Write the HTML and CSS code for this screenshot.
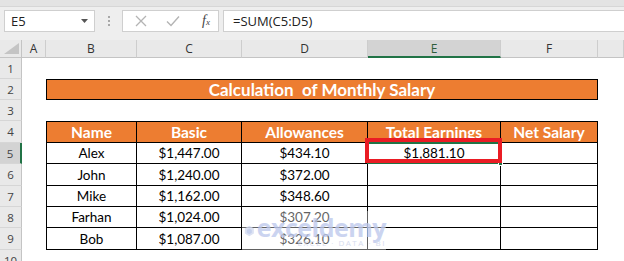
FILE: index.html
```html
<!DOCTYPE html>
<html lang="en">
<head>
    <meta charset="UTF-8">
    <meta name="viewport" content="width=device-width, initial-scale=1.0">
    <title>Calculation of Monthly Salary</title>
    <link rel="stylesheet" href="styles.css">
</head>
<body>
    <div class="app">
        <div class="ribbon-edge"></div>

        <!-- Formula bar -->
        <div class="formula-bar">
            <div class="name-box">
                <span>E5</span>
                <svg class="caret" width="7" height="4" viewBox="0 0 7 4"><path d="M0 0h7L3.5 4z" fill="#555"/></svg>
            </div>
            <div class="grip">
                <span></span><span></span><span></span>
            </div>
            <div class="fx-buttons">
                <svg width="12" height="12" viewBox="0 0 12 12"><path d="M1 1l10 10M11 1L1 11" stroke="#b4b4b4" stroke-width="1.3" fill="none"/></svg>
                <svg width="14" height="12" viewBox="0 0 14 12"><path d="M1 6.5l4 4L13 1.5" stroke="#b4b4b4" stroke-width="1.4" fill="none"/></svg>
                <span class="fx">f<sub>x</sub></span>
            </div>
            <div class="formula-input">=SUM(C5:D5)</div>
        </div>

        <!-- Worksheet -->
        <div class="sheet">
            <div class="corner"><svg width="15" height="11" viewBox="0 0 15 11"><path d="M15 0v11H0z" fill="#c4c4c4"/></svg></div>
            <div class="col-head">A</div>
            <div class="col-head">B</div>
            <div class="col-head">C</div>
            <div class="col-head">D</div>
            <div class="col-head selected">E</div>
            <div class="col-head">F</div>
            <div class="col-head"></div>

            <div class="row-head">1</div>
            <div></div><div></div><div></div><div></div><div></div><div></div><div></div>

            <div class="row-head">2</div>
            <div></div>
            <div class="title">Calculation&nbsp; of Monthly Salary</div>
            <div></div>

            <div class="row-head">3</div>
            <div></div><div></div><div></div><div></div><div></div><div></div><div></div>

            <div class="row-head">4</div>
            <div></div>
            <div class="cell head first">Name</div>
            <div class="cell head">Basic</div>
            <div class="cell head">Allowances</div>
            <div class="cell head">Total Earnings</div>
            <div class="cell head">Net Salary</div>
            <div></div>

            <div class="row-head selected">5</div>
            <div></div>
            <div class="cell first">Alex</div>
            <div class="cell">$1,447.00</div>
            <div class="cell">$434.10</div>
            <div class="cell active">
                $1,881.10
                <span class="selection"></span>
                <span class="fill-handle"></span>
                <span class="highlight"></span>
            </div>
            <div class="cell"></div>
            <div></div>

            <div class="row-head">6</div>
            <div></div>
            <div class="cell first">John</div>
            <div class="cell">$1,240.00</div>
            <div class="cell">$372.00</div>
            <div class="cell"></div>
            <div class="cell"></div>
            <div></div>

            <div class="row-head">7</div>
            <div></div>
            <div class="cell first">Mike</div>
            <div class="cell">$1,162.00</div>
            <div class="cell">$348.60</div>
            <div class="cell"></div>
            <div class="cell"></div>
            <div></div>

            <div class="row-head">8</div>
            <div></div>
            <div class="cell first">Farhan</div>
            <div class="cell">$1,024.00</div>
            <div class="cell">$307.20</div>
            <div class="cell"></div>
            <div class="cell"></div>
            <div></div>

            <div class="row-head">9</div>
            <div></div>
            <div class="cell first">Bob</div>
            <div class="cell">$1,087.00</div>
            <div class="cell">$326.10</div>
            <div class="cell"></div>
            <div class="cell"></div>
            <div></div>

            <div class="row-head">10</div>
            <div></div><div></div><div></div><div></div><div></div><div></div><div></div>
        </div>

        <!-- Watermark -->
        <div class="watermark">
            <svg width="26" height="28" viewBox="0 0 26 28">
                <path d="M13 1l11 6v13l-11 7L2 20V7z" fill="#d6ddf1"/>
                <path d="M13 8l6 3.5v7L13 22l-6-3.5v-7z" fill="#bcc8ea"/>
            </svg>
            <div class="wm-text">
                <span class="wm-name">exceldemy</span>
                <span class="wm-tag">EXCEL · DATA · BI</span>
            </div>
        </div>
    </div>
</body>
</html>
```

FILE: styles.css
```css
* {
    margin: 0;
    padding: 0;
    box-sizing: border-box;
}

body {
    width: 624px;
    height: 261px;
    overflow: hidden;
    background-color: #fff;
    font-family: "Open Sans", "Noto Sans", sans-serif;
}

.app {
    position: relative;
    width: 624px;
    height: 261px;
    overflow: hidden;
    background-color: #fff;
}

.ribbon-edge {
    height: 7px;
    background-color: #e3e3e3;
    border-bottom: 1px solid #d6d6d6;
}

/* Formula bar */
.formula-bar {
    display: flex;
    align-items: center;
    height: 33px;
    padding: 2px 0 7px 4px;
    background-color: #eeeeee;
}

.name-box,
.fx-buttons,
.formula-input {
    height: 22px;
    background-color: #fff;
    border: 1px solid #cfcfcf;
}

.name-box {
    display: flex;
    align-items: center;
    justify-content: space-between;
    width: 91px;
    padding: 0 6px 0 6px;
    font-size: 13px;
    color: #222;
}

.grip {
    display: flex;
    flex-direction: column;
    align-items: center;
    gap: 2px;
    width: 27px;
}

.grip span {
    width: 2px;
    height: 2px;
    background-color: #a8a8a8;
}

.fx-buttons {
    display: flex;
    align-items: center;
    width: 97px;
    padding-left: 12px;
    gap: 19px;
}

.fx {
    font-family: "Liberation Serif", serif;
    font-style: italic;
    font-size: 14px;
    color: #444;
    margin-left: 3px;
}

.fx sub {
    font-size: 9px;
    vertical-align: 0;
}

.formula-input {
    flex: 1;
    margin-left: 4px;
    padding-left: 9px;
    border-right: none;
    font-size: 13px;
    line-height: 20px;
    color: #222;
}

/* Worksheet grid */
.sheet {
    display: grid;
    grid-template-columns: 22px 24px 91px 105px 126px 133px 97px 1fr;
    grid-template-rows: 18px 21px 21px 21px 22px 21px 22px 21px 21px 22px 21px;
    font-family: "Lato", "Open Sans", sans-serif;
    font-size: 13.5px;
    color: #000;
}

.corner {
    display: flex;
    align-items: flex-end;
    justify-content: flex-end;
    padding: 0 2px 3px 0;
    background-color: #e9e9e9;
    border-right: 1px solid #c4c4c4;
    border-bottom: 1px solid #c4c4c4;
}

.col-head {
    display: flex;
    align-items: center;
    justify-content: center;
    background-color: #e9e9e9;
    border-right: 1px solid #cdcdcd;
    border-bottom: 1px solid #c4c4c4;
    font-family: "Open Sans", sans-serif;
    font-size: 12px;
    color: #333;
}

.col-head.selected {
    background-color: #d3d3d3;
    border-bottom: 2px solid #217346;
    color: #2e5d3c;
}

.row-head {
    display: flex;
    align-items: center;
    justify-content: center;
    background-color: #e9e9e9;
    border-right: 1px solid #c4c4c4;
    border-bottom: 1px solid #d6d6d6;
    font-family: "Open Sans", sans-serif;
    font-size: 11.5px;
    color: #444;
}

.row-head.selected {
    background-color: #d3d3d3;
    border-right: 2px solid #217346;
}

.title {
    grid-column: span 5;
    display: flex;
    align-items: center;
    justify-content: center;
    background-color: #ed7d31;
    border: 1px solid #000;
    color: #fff;
    font-weight: bold;
    font-size: 17px;
}

.cell {
    display: flex;
    align-items: center;
    justify-content: center;
    border-right: 1px solid #000;
    border-bottom: 1px solid #000;
}

.cell.first {
    border-left: 1px solid #000;
}

.cell.head {
    border-top: 1px solid #000;
    background-color: #ed7d31;
    color: #fff;
    font-weight: bold;
    font-size: 15.5px;
}

/* Active cell E5 */
.active {
    position: relative;
}

.selection {
    position: absolute;
    top: -1px;
    left: -1px;
    right: -1px;
    bottom: -1px;
    border: 2px solid #217346;
}

.fill-handle {
    position: absolute;
    right: -3px;
    bottom: -3px;
    width: 5px;
    height: 5px;
    background-color: #217346;
    border: 1px solid #fff;
}

.highlight {
    position: absolute;
    top: -5px;
    left: -3px;
    right: -2px;
    bottom: 0;
    border: 4px solid #ea1c24;
}

/* Watermark */
.watermark {
    position: absolute;
    left: 242px;
    top: 211px;
    width: 144px;
    height: 39px;
    display: flex;
    align-items: center;
    gap: 2px;
    padding-left: 2px;
    background-color: rgba(255, 255, 255, 0.45);
    opacity: 0.85;
}

.wm-text {
    display: flex;
    flex-direction: column;
    line-height: 1;
}

.wm-name {
    font-family: "Open Sans", sans-serif;
    font-weight: bold;
    font-size: 25px;
    letter-spacing: -0.5px;
    color: #c3cdee;
}

.wm-tag {
    align-self: flex-end;
    margin-top: -1px;
    font-family: "Open Sans", sans-serif;
    font-size: 8px;
    letter-spacing: 1.5px;
    color: #cfd6ec;
}
```
